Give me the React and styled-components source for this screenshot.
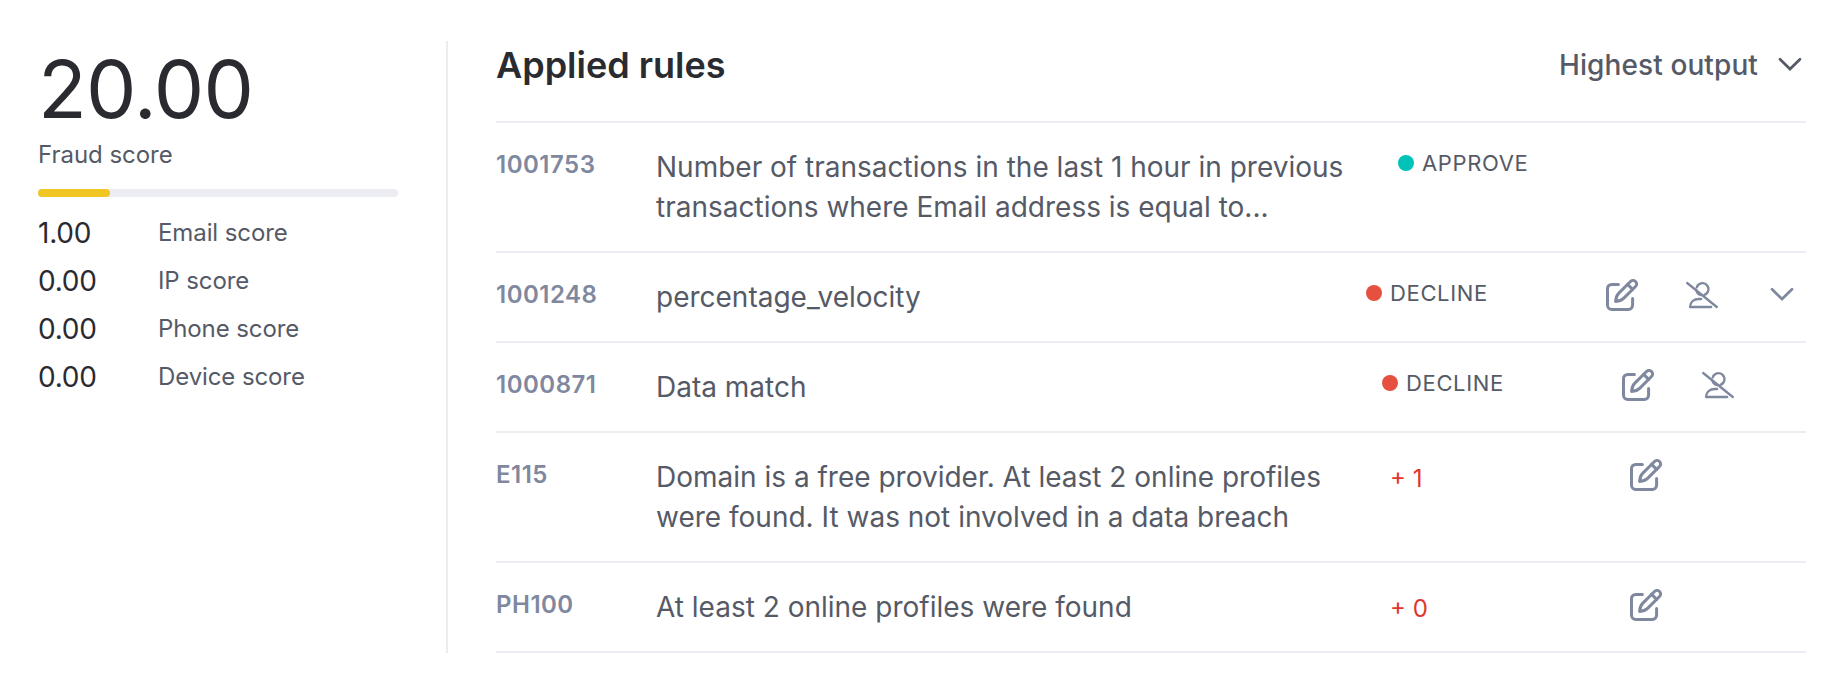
import React from 'react'
import styled, { createGlobalStyle } from 'styled-components'

const GlobalStyle = createGlobalStyle`
  * {
    box-sizing: border-box;
  }
  body {
    margin: 0;
    background: #fff;
    font-family: Inter, 'Liberation Sans', sans-serif;
  }
`

const Page = styled.div`
  display: flex;
  width: 1848px;
  height: 688px;
  padding: 41px 42px 35px 38px;
  background: #fff;
`

const ScorePanel = styled.aside`
  width: 410px;
  padding-right: 48px;
  border-right: 2px solid #ecedf2;
`

const TotalScore = styled.div`
  margin-bottom: 2px;
  font-size: 80px;
  line-height: 96px;
  letter-spacing: -0.8px;
  color: #2a2b30;
`

const ScoreLabel = styled.div`
  font-size: 24px;
  line-height: 32px;
  letter-spacing: -0.03px;
  color: #555a66;
`

const ProgressTrack = styled.div`
  height: 8px;
  margin: 18px 0 12px;
  border-radius: 4px;
  background: #ecedf2;
`

const ProgressFill = styled.div`
  height: 100%;
  border-radius: 4px;
  background: #f0c624;
`

const ScoreRow = styled.div`
  display: grid;
  grid-template-columns: 120px 1fr;
  align-items: center;
  height: 48px;
`

const ScoreValue = styled.div`
  font-size: 28px;
  line-height: 40px;
  letter-spacing: -0.25px;
  color: #2a2b30;
`

const RowLabel = styled(ScoreLabel)`
  letter-spacing: -0.1px;
`

const RulesPanel = styled.main`
  flex: 1;
  margin-left: 48px;
`

const RulesHeader = styled.header`
  display: flex;
  align-items: flex-start;
  justify-content: space-between;
  height: 82px;
  border-bottom: 2px solid #ecedf2;
`

const Title = styled.h2`
  margin: 0;
  font-size: 36px;
  font-weight: 600;
  line-height: 48px;
  color: #2a2b30;
`

const SortSelect = styled.div`
  display: flex;
  align-items: center;
  gap: 16px;
  height: 48px;
  font-size: 28px;
  font-weight: 500;
  letter-spacing: 0.1px;
  color: #555a66;
`

const Rule = styled.div`
  display: flex;
  align-items: flex-start;
  height: ${props => props.$tall ? 130 : 90}px;
  padding-top: 24px;
  border-bottom: 2px solid #ecedf2;
`

const RuleId = styled.div`
  width: 160px;
  font-size: 24px;
  font-weight: 600;
  line-height: 36px;
  letter-spacing: 0.5px;
  color: #7f889e;
`

const Description = styled.div`
  width: ${props => props.$width}px;
  font-size: 28px;
  line-height: 40px;
  white-space: pre-line;
  color: #555a66;
`

const Status = styled.div`
  display: flex;
  align-items: center;
  gap: 8px;
  width: 240px;
  height: 32px;
  font-size: 22px;
  letter-spacing: 0.65px;
  color: #555a66;
`

const Dot = styled.span`
  width: 16px;
  height: 16px;
  border-radius: 50%;
  background: ${props => props.$approve ? '#00c2b8' : '#e5503f'};
`

const Points = styled.div`
  width: 240px;
  font-size: 24px;
  line-height: 44px;
  color: #e0352b;
`

const Actions = styled.div`
  display: flex;
  align-items: center;
  gap: 48px;
  padding-top: 2px;
  color: #7f889e;
`

const Icon = styled.svg`
  display: block;
  width: 32px;
  height: 32px;
  fill: none;
  stroke: currentColor;
  stroke-width: ${props => props.$stroke || 2.7};
  stroke-linecap: round;
  stroke-linejoin: round;
`

const EditIcon = () => (
  <Icon viewBox="0 0 32 32" $stroke={3}>
    <path d="M12.4 5.4H5.7A4.2 4.2 0 0 0 1.5 9.6V26.3A4.2 4.2 0 0 0 5.7 30.5H22.4A4.2 4.2 0 0 0 26.6 26.3V19.4" />
    <path d="M24.5 2.5A3.5 3.5 0 0 1 29.5 7.5L17.6 19.4C15.6 21.4 12.9 22.2 9.6 22.4C9.8 19.1 10.6 16.4 12.6 14.4Z" />
    <path d="M21.6 5.4L26.6 10.4" />
  </Icon>
)

const UserOffIcon = () => (
  <Icon viewBox="0 0 32 32" $stroke={2.3}>
    <path d="M1.2 4L30.8 28" />
    <path d="M10.7 8.5A6 6 0 1 1 18.4 15.9M10.3 11.2A6 6 0 0 0 15.6 16" />
    <path d="M15.2 20H12.8C7.8 20 4.2 23 4 28H25.2" />
  </Icon>
)

const ChevronIcon = () => (
  <Icon viewBox="0 0 32 32">
    <path d="M6 10.2L16 20L26 10.2" strokeLinejoin="miter" />
  </Icon>
)

const scores = [
  { label: 'Email score', value: '1.00' },
  { label: 'IP score', value: '0.00' },
  { label: 'Phone score', value: '0.00' },
  { label: 'Device score', value: '0.00' },
]

const rules = [
  {
    id: '1001753',
    text: 'Number of transactions in the last 1 hour in previous\ntransactions where Email address is equal to...',
    status: 'APPROVE',
    width: 742,
    tall: true,
  },
  { id: '1001248', text: 'percentage_velocity', status: 'DECLINE', width: 710, edit: true, user: true, more: true },
  { id: '1000871', text: 'Data match', status: 'DECLINE', width: 726, edit: true, user: true },
  {
    id: 'E115',
    text: 'Domain is a free provider. At least 2 online profiles\nwere found. It was not involved in a data breach',
    points: '+ 1',
    width: 734,
    tall: true,
    edit: true,
  },
  { id: 'PH100', text: 'At least 2 online profiles were found', points: '+ 0', width: 734, edit: true },
]

const App = () => {
  return (
    <Page>
      <GlobalStyle />
      <ScorePanel>
        <TotalScore>20.00</TotalScore>
        <ScoreLabel>Fraud score</ScoreLabel>
        <ProgressTrack>
          <ProgressFill style={{ width: '20%' }} />
        </ProgressTrack>
        {scores.map((s) =>
          <ScoreRow key={s.label}>
            <ScoreValue>{s.value}</ScoreValue>
            <RowLabel>{s.label}</RowLabel>
          </ScoreRow>
        )}
      </ScorePanel>
      <RulesPanel>
        <RulesHeader>
          <Title>Applied rules</Title>
          <SortSelect>
            Highest output
            <ChevronIcon />
          </SortSelect>
        </RulesHeader>
        {rules.map((r) =>
          <Rule key={r.id} $tall={r.tall}>
            <RuleId>{r.id}</RuleId>
            <Description $width={r.width}>{r.text}</Description>
            {r.status
              ? <Status><Dot $approve={r.status === 'APPROVE'} />{r.status}</Status>
              : <Points>{r.points}</Points>}
            <Actions>
              {r.edit && <EditIcon />}
              {r.user && <UserOffIcon />}
              {r.more && <ChevronIcon />}
            </Actions>
          </Rule>
        )}
      </RulesPanel>
    </Page>
  )
}

export default App
